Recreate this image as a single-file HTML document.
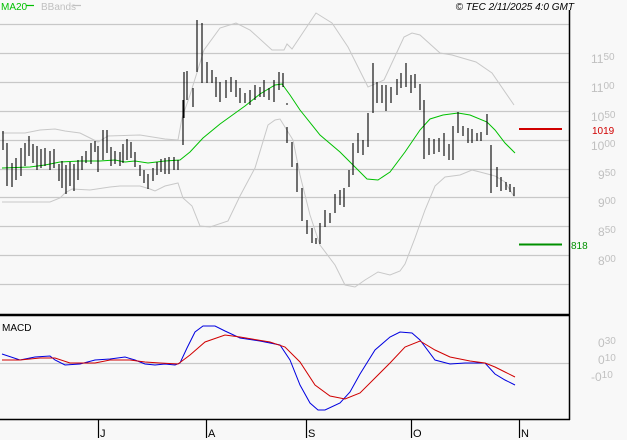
<!DOCTYPE html>
<html><head><meta charset="utf-8"><style>
html,body{margin:0;padding:0;background:#f8f8f8;}
svg{display:block;}
text{font-family:"Liberation Sans",sans-serif;}
</style></head><body>
<svg width="627" height="440" viewBox="0 0 627 440" xmlns="http://www.w3.org/2000/svg">
<rect width="627" height="440" fill="#f8f8f8"/>
<g stroke="#c8c8c8" stroke-width="1.2">
<line x1="0" y1="24.5" x2="569" y2="24.5"/>
<line x1="0" y1="53.5" x2="569" y2="53.5"/>
<line x1="0" y1="82.5" x2="569" y2="82.5"/>
<line x1="0" y1="111.5" x2="569" y2="111.5"/>
<line x1="0" y1="140.5" x2="569" y2="140.5"/>
<line x1="0" y1="169.5" x2="569" y2="169.5"/>
<line x1="0" y1="197.5" x2="569" y2="197.5"/>
<line x1="0" y1="226.5" x2="569" y2="226.5"/>
<line x1="0" y1="255.5" x2="569" y2="255.5"/>
<line x1="0" y1="284.5" x2="569" y2="284.5"/>
<line x1="0" y1="363.5" x2="569" y2="363.5"/>
</g>
<line x1="569.5" y1="10" x2="569.5" y2="420" stroke="#000" stroke-width="1.5"/>
<line x1="0" y1="315" x2="570" y2="315" stroke="#000" stroke-width="2.5"/>
<line x1="0" y1="419.5" x2="570" y2="419.5" stroke="#000" stroke-width="1.5"/>
<g fill="none" stroke="#c8c8c8" stroke-width="1">
<polyline points="2,133 25,133 40,130 55,129 65,131 80,133 90,138 98,142 108,136 140,135 165,139 178,140 182,118 190,95 204,50 220,28 236,23 250,30 272,50 284,50 287,44 292,49 316,13 332,23 348,47 368,87 384,80 404,37 412,33 420,35 440,53 452,55 476,62 492,73 514,105"/>
<polyline points="2,202 50,202 60,198 65,193 72,189 90,190 110,187 120,186 140,186 150,189 155,191 165,186 178,183 183,198 192,206 200,226 210,227 228,221 240,196 255,168 268,125 275,120 280,119 293,140 300,175 310,215 320,245 335,265 345,285 355,287 365,280 378,272 390,275 400,271 405,264 415,238 425,210 435,186 445,177 460,175 472,170 480,172 495,176 505,182 515,198"/>
</g>
<polyline fill="none" stroke="#00c000" stroke-width="1" points="2,168 30,167 45,165 60,162 80,161 100,161 115,160 125,162 135,161 148,163 165,161 180,160 190,152 203,138 220,124 245,106 260,94 275,85 282,84 290,95 300,110 320,135 340,152 355,167 367,179 378,180 390,172 405,152 420,130 430,119 443,115 458,113 470,115 487,122 495,130 505,143 515,153"/>
<path fill="none" stroke="#000" stroke-width="1.1" d="
M3,131V150M7,143V186M12,163V187M16,158V180M21,148V176M25,143V166M29,136V156M33,144V163M37,146V170M41,149V168M45,148V166M50,151V170M54,149V168M59,164V181M62,161V188M66,165V194M70,162V186M74,164V191M78,160V180M82,156V170M86,151V163M91,143V164M95,141V152M98,146V172M103,130V160M107,130V153M111,147V166M115,151V164M120,152V166M123,144V163M127,139V160M131,142V158M135,152V167M140,165V176M144,170V183M148,174V189M153,168V181M157,162V175M161,159V172M165,158V174M169,157V174M174,157V170M178,160V170
M183,100V145M184,72V118M187,71V100M193,88V107M197,20V72M202,23V83M207,62V83M212,70V83M216,77V97M220,82V102M226,80V98M231,77V92M236,80V97M240,88V103M245,93V103M250,90V105M255,85V100M260,87V97M264,80V97M269,88V100M274,80V102M279,72V90M283,73V87
M287,127V143M292,142V167M297,163V192M302,188V221M307,220V234M312,228V243M316,238V244M320,223V244M325,210V227M330,213V223M335,194V213M340,190V205M344,188V207M349,170V187M353,143V175M358,133V153M363,140V155M368,113V147M373,63V113M377,82V103M382,85V103M386,85V111M391,87V103M397,79V95M401,73V88M406,63V87M411,75V93M415,74V88M420,84V110M424,100V159M429,138V155M434,139V154M439,138V152M444,133V156M449,144V160M453,126V160M458,112V133M463,126V136M468,128V143M472,129V143M477,133V141M481,132V141M487,114V135M491,145V193M497,167V187M501,177V191M506,182V190M510,184V192M514,187V196"/>
<line x1="286" y1="104" x2="288" y2="104" stroke="#000"/>
<line x1="519" y1="129" x2="562" y2="129" stroke="#d00000" stroke-width="2"/>
<line x1="519" y1="244.5" x2="562" y2="244.5" stroke="#009000" stroke-width="2"/>
<text x="571" y="249" font-size="10" fill="#009000">818</text>
<text x="592" y="134" font-size="10" fill="#d00000">1019</text>
<g fill="#c0c0c0" font-size="12">
<text x="591" y="63">11<tspan font-size="10" dy="-3">50</tspan></text>
<text x="591" y="92">11<tspan font-size="10" dy="-3">00</tspan></text>
<text x="591" y="121">10<tspan font-size="10" dy="-3">50</tspan></text>
<text x="591" y="150">10<tspan font-size="10" dy="-3">00</tspan></text>
<text x="598" y="179">9<tspan font-size="10" dy="-3">50</tspan></text>
<text x="598" y="207">9<tspan font-size="10" dy="-3">00</tspan></text>
<text x="598" y="236">8<tspan font-size="10" dy="-3">50</tspan></text>
<text x="598" y="265">8<tspan font-size="10" dy="-3">00</tspan></text>
<text x="598" y="347">0<tspan font-size="10" dy="-3">30</tspan></text>
<text x="598" y="364">0<tspan font-size="10" dy="-3">10</tspan></text>
<text x="591" y="381">-0<tspan font-size="10" dy="-3">10</tspan></text>
</g>
<text x="2" y="331" font-size="10" fill="#000">MACD</text>
<polyline fill="none" stroke="#0000e0" stroke-width="1" points="2,354 20,360 35,357 50,356 55,360 65,365 80,364 95,360 110,359 125,357 135,360 145,364 155,365 165,364 175,365 180,363 187,348 195,332 203,326 215,326 225,331 240,338 260,341 280,345 290,360 300,385 310,403 318,410 325,410 340,403 350,392 360,374 375,350 390,337 400,332 412,333 420,340 435,360 450,364 465,363 485,363 495,374 505,380 515,385"/>
<polyline fill="none" stroke="#d00000" stroke-width="1" points="2,360 20,360 40,358 55,358 70,363 95,363 110,360 130,360 145,362 160,363 178,364 190,355 205,342 225,335 240,337 270,342 285,347 300,362 315,385 330,396 345,399 360,393 375,378 390,363 405,347 420,341 435,350 450,357 470,361 485,363 495,367 505,372 515,377"/>
<g stroke="#000" stroke-width="1.2">
<line x1="98.5" y1="420" x2="98.5" y2="438"/>
<line x1="206.5" y1="420" x2="206.5" y2="438"/>
<line x1="306.5" y1="420" x2="306.5" y2="438"/>
<line x1="411.5" y1="420" x2="411.5" y2="438"/>
<line x1="519.5" y1="420" x2="519.5" y2="438"/>
</g>
<g font-size="11" fill="#000">
<text x="100" y="437">J</text>
<text x="208" y="437">A</text>
<text x="308" y="437">S</text>
<text x="413" y="437">O</text>
<text x="521" y="437">N</text>
</g>
<text x="1" y="10" font-size="10" fill="#00c000">MA20</text>
<line x1="26" y1="5.5" x2="34" y2="5.5" stroke="#00c000" stroke-width="1.2"/>
<text x="41" y="10" font-size="10" fill="#c0c0c0">BBands</text>
<line x1="73" y1="5.5" x2="81" y2="5.5" stroke="#c0c0c0" stroke-width="1.2"/>
<text x="574" y="10" font-size="10" font-style="italic" fill="#000" text-anchor="end">© TEC 2/11/2025 4:0 GMT</text>
</svg>
</body></html>
